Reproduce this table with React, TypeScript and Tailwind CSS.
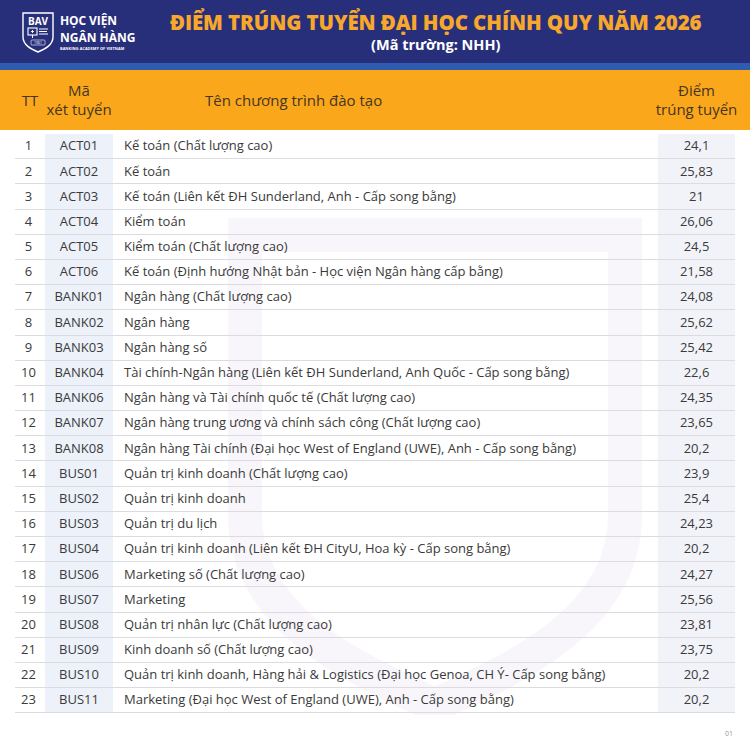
import React from "react";

type Row = { code: string; name: string; score: string };

const rows: Row[] = [
  { code: "ACT01", name: "Kế toán (Chất lượng cao)", score: "24,1" },
  { code: "ACT02", name: "Kế toán", score: "25,83" },
  { code: "ACT03", name: "Kế toán (Liên kết ĐH Sunderland, Anh - Cấp song bằng)", score: "21" },
  { code: "ACT04", name: "Kiểm toán", score: "26,06" },
  { code: "ACT05", name: "Kiểm toán (Chất lượng cao)", score: "24,5" },
  { code: "ACT06", name: "Kế toán (Định hướng Nhật bản - Học viện Ngân hàng cấp bằng)", score: "21,58" },
  { code: "BANK01", name: "Ngân hàng (Chất lượng cao)", score: "24,08" },
  { code: "BANK02", name: "Ngân hàng", score: "25,62" },
  { code: "BANK03", name: "Ngân hàng số", score: "25,42" },
  { code: "BANK04", name: "Tài chính-Ngân hàng (Liên kết ĐH Sunderland, Anh Quốc - Cấp song bằng)", score: "22,6" },
  { code: "BANK06", name: "Ngân hàng và Tài chính quốc tế (Chất lượng cao)", score: "24,35" },
  { code: "BANK07", name: "Ngân hàng trung ương và chính sách công (Chất lượng cao)", score: "23,65" },
  { code: "BANK08", name: "Ngân hàng Tài chính (Đại học West of England (UWE), Anh - Cấp song bằng)", score: "20,2" },
  { code: "BUS01", name: "Quản trị kinh doanh (Chất lượng cao)", score: "23,9" },
  { code: "BUS02", name: "Quản trị kinh doanh", score: "25,4" },
  { code: "BUS03", name: "Quản trị du lịch", score: "24,23" },
  { code: "BUS04", name: "Quản trị kinh doanh (Liên kết ĐH CityU, Hoa kỳ - Cấp song bằng)", score: "20,2" },
  { code: "BUS06", name: "Marketing số (Chất lượng cao)", score: "24,27" },
  { code: "BUS07", name: "Marketing", score: "25,56" },
  { code: "BUS08", name: "Quản trị nhân lực (Chất lượng cao)", score: "23,81" },
  { code: "BUS09", name: "Kinh doanh số (Chất lượng cao)", score: "23,75" },
  { code: "BUS10", name: "Quản trị kinh doanh, Hàng hải & Logistics  (Đại học Genoa, CH Ý- Cấp song bằng)", score: "20,2" },
  { code: "BUS11", name: "Marketing (Đại học West of England (UWE), Anh - Cấp song bằng)", score: "20,2" },
];

function Logo() {
  return (
    <div className="flex items-center gap-[5px]">
      <svg width="34" height="42" viewBox="0 0 34 42">
        <path
          d="M2 2 H32 V26 C32 34 24 38 17 41 C10 38 2 34 2 26 Z"
          fill="none"
          stroke="#ffffff"
          strokeWidth="1.4"
        />
        <text x="17" y="14" textAnchor="middle" fill="#ffffff" fontSize="10" fontWeight="700" fontFamily="Open Sans, sans-serif">
          BAV
        </text>
        <rect x="7" y="17" width="9" height="7" fill="none" stroke="#ffffff" strokeWidth="1.1" />
        <path d="M10 20.5 H13 M11.5 19 V22" stroke="#ffffff" strokeWidth="0.9" />
        <path d="M18 18 H27 M18 20.5 H26 M18 23 H27" stroke="#ffffff" strokeWidth="1.1" />
        <path d="M11.5 24 V27" stroke="#ffffff" strokeWidth="1" />
        <rect x="10" y="29" width="14" height="5" rx="1" fill="none" stroke="#ffffff" strokeWidth="0.6" />
        <text x="17" y="33" textAnchor="middle" fill="#ffffff" fontSize="3.6" fontFamily="Open Sans, sans-serif">
          1961
        </text>
      </svg>
      <div className="flex flex-col text-white">
        <span className="text-[12px] font-bold leading-[17px] tracking-[-0.1px]">HỌC VIỆN</span>
        <span className="text-[12px] font-bold leading-[17px]">NGÂN HÀNG</span>
        <span className="text-[3.8px] font-bold leading-[5px] tracking-[0.1px]">BANKING ACADEMY OF VIETNAM</span>
      </div>
    </div>
  );
}

// faint shield behind the table
function Watermark() {
  return (
    <svg
      className="pointer-events-none absolute left-[225px] top-[215px]"
      width="420"
      height="500"
      viewBox="0 0 420 500"
    >
      <path
        d="M20 20 H400 V300 C400 400 300 450 210 490 C120 450 20 400 20 300 Z"
        fill="none"
        stroke="#f8f6fb"
        strokeWidth="34"
      />
    </svg>
  );
}

export default function App() {
  return (
    <div className="relative h-[750px] w-[750px] overflow-hidden bg-white font-['Open_Sans',sans-serif] text-[#3a3a3a]">
      <Watermark />

      <div className="relative flex h-[63px] items-center bg-[#282f7a] pl-[21px]">
        <Logo />
        <div className="flex flex-1 flex-col items-center pr-[14px] pt-[1px]">
          <h1 className="text-[20.5px] font-extrabold leading-[25px] tracking-[-0.1px] text-[#f7a72b]">
            ĐIỂM TRÚNG TUYỂN ĐẠI HỌC CHÍNH QUY NĂM 2026
          </h1>
          <p className="text-[14.5px] font-bold leading-[19px] text-white">(Mã trường: NHH)</p>
        </div>
      </div>
      <div className="relative h-[7px] bg-[#2f5cae]" />

      <div className="relative grid h-[60px] grid-cols-[30px_68px_545px_77px] items-center bg-[#fba71c] px-[15px] text-[15px] leading-[19px] text-[#45361f]">
        <div className="text-center">TT</div>
        <div className="whitespace-nowrap text-center">
          Mã
          <br />
          xét tuyển
        </div>
        <div className="pl-[92px]">Tên chương trình đào tạo</div>
        <div className="flex flex-col items-center whitespace-nowrap">
          <span>Điểm</span>
          <span>trúng tuyển</span>
        </div>
      </div>

      <div className="relative mx-[15px] mt-[4px]">
        {rows.map((r, i) => (
          <div
            key={r.code}
            className="grid h-[25.2px] grid-cols-[30px_68px_545px_77px] items-center border-b border-[#dcdce0] text-[13px]"
          >
            <div className="-ml-[3px] text-center">{i + 1}</div>
            <div className="flex h-full items-center justify-center bg-[#edf1f9] font-medium">{r.code}</div>
            <div className="truncate pl-[11px]">{r.name}</div>
            <div className="flex h-full items-center justify-center bg-[#f2f3f9]">{r.score}</div>
          </div>
        ))}
      </div>

      <div className="absolute bottom-[11px] right-[17px] text-[7px] text-[#9a9a9a]">01</div>
    </div>
  );
}
